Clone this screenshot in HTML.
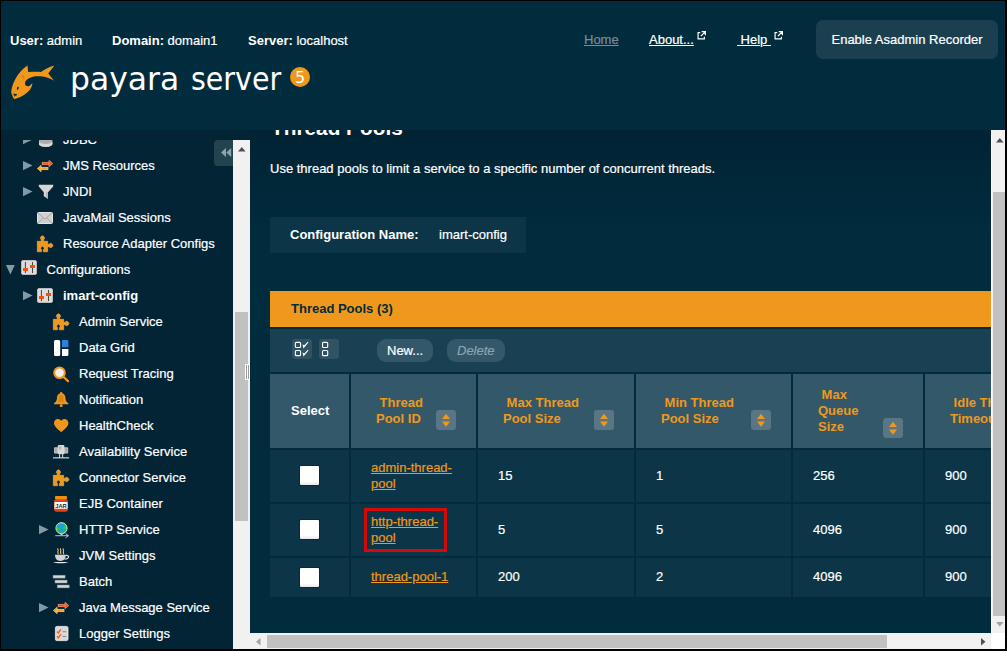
<!DOCTYPE html>
<html lang="en"><head><meta charset="utf-8"><title>Thread Pools - Payara Server Console</title>
<style>
*{box-sizing:border-box}
html,body{margin:0;padding:0}
body{width:1007px;height:651px;overflow:hidden;background:#000;font:13px/15px "Liberation Sans",Arial,sans-serif;color:#fff;position:relative;-webkit-text-stroke:0.200px}
b,h1,.b,.h,#tt,#word,#ver,svg text{-webkit-text-stroke:0}
a{color:inherit}
#app{position:absolute;left:1px;top:1px;width:1004px;height:648px;background:#002c3e;overflow:hidden}
#hdr{position:absolute;left:0;top:0;width:1004px;height:129px;background:#002c3e}
.info{position:absolute;top:32px;height:15px;white-space:nowrap}
.info b{font-weight:bold}
.nav{position:absolute;top:31px;height:15px;white-space:pre;text-decoration:underline}
.ext{position:absolute;top:29.500px}
#rec{position:absolute;left:815px;top:19px;width:182px;height:39px;border-radius:7px;background:#1c3f50;line-height:39px;text-align:center;color:#fff}
#logo{position:absolute;left:4px;top:59px}
#word{position:absolute;left:68.500px;top:53px;width:220px;height:50px;font:32px/50px "DejaVu Sans","Liberation Sans",sans-serif;white-space:nowrap}
#word span{position:absolute;left:0;top:0;display:block;transform-origin:0 0}
#ver{position:absolute;left:289px;top:66px;width:20px;height:20px;border-radius:10px;background:#f0981b;color:#fff;font:16px/22px "DejaVu Sans","Liberation Sans",sans-serif;text-align:center}
#side{position:absolute;left:0;top:129px;width:249px;height:519px;background:#022435}
#tree{position:absolute;left:0;top:10px;width:232px;height:509px;overflow:hidden}
.ti{position:absolute;height:26px;line-height:26px;white-space:nowrap}
.ti.b{font-weight:bold}
.ic{position:absolute;display:block;overflow:visible}
#collapse{position:absolute;left:213px;top:10px;width:30px;height:26px;border-radius:4px 0 0 4px;background:#23434f}
#sscroll{position:absolute;left:232px;top:10px;width:17px;height:509px;background:#f1f1f1}
#sscroll .thumb{position:absolute;left:2px;top:172px;width:13px;height:209px;background:#c1c1c1}
#grip{position:absolute;left:244px;top:234px;width:5px;height:16px;border:1px solid #fff;border-right-width:0;background:linear-gradient(90deg,#9a9a9a 0,#9a9a9a 1px,#fff 1px,#fff 2px,#9a9a9a 2px,#9a9a9a 3px,#fff 3px)}
#main{position:absolute;left:249px;top:129px;width:741px;height:503px;overflow:hidden;background:linear-gradient(180deg,#012333 0,#002c3e 100px,#002c3e 100%)}
h1{position:absolute;left:21px;top:-14px;margin:0;font:bold 20.800px/24px "Liberation Sans",Arial,sans-serif;white-space:nowrap}
#desc{position:absolute;left:20px;top:31px;white-space:nowrap}
#cfg{position:absolute;left:20px;top:87px;width:256px;height:36px;background:#0c3547;line-height:36px;white-space:nowrap}
#cfg b{position:absolute;left:20px}
#cfg span{position:absolute;left:169px}
#tt{position:absolute;left:20px;top:161px;width:760px;height:36px;background:#f0981b;color:#002c3e;font-weight:bold;line-height:36px;padding-left:21px}
#tb{position:absolute;left:20px;top:199px;width:760px;height:43px;background:#1a4053}
.ib{position:absolute;top:10px;width:20px;height:20px;border-radius:3px;background:#2f5363}
.ib svg{display:block}
.btn{position:absolute;top:10px;height:23px;line-height:23px;border-radius:9px;background:#32586a;padding:0 10px;white-space:nowrap}
.btn.dis{font-style:italic;color:#8fa3ad}
.c{position:absolute;background:#0c3547}
.h{position:absolute;top:244px;height:74px;background:#32586a;color:#f0981b;font-weight:bold;line-height:16px;white-space:pre}
.h span{position:absolute}
.sb{position:absolute;width:20px;height:20px;border-radius:3px;background:#587684}
.sb svg{display:block}
.v{position:absolute;left:20px;white-space:nowrap;line-height:16px}
.lk{color:#f0981b;text-decoration:underline}
.cb{position:absolute;left:30px;width:19px;height:19px;border-radius:1px;background:linear-gradient(180deg,#fff 0,#fff 80%,#e9e6e6 100%);box-shadow:0 0 0 1px #072a3a}
#mark{position:absolute;left:114px;top:378px;width:83px;height:44px;border:3px solid #d40a0a}
#vs{position:absolute;left:990px;top:129px;width:14px;height:503px;background:#f1f1f1;border-left:1px solid #fff}
#vs .thumb{position:absolute;left:1px;top:62px;width:12px;height:424px;background:#c1c1c1}
#hs{position:absolute;left:249px;top:632px;width:741px;height:16px;background:#f1f1f1}
#hs .thumb{position:absolute;left:17px;top:2px;width:620px;height:13px;background:#c1c1c1}
#corner{position:absolute;left:990px;top:632px;width:14px;height:16px;background:#fff}
</style></head>
<body>
<div id="app">
 <div id="hdr">
  <div class="info" style="left:9px"><b>User:</b> admin</div>
  <div class="info" style="left:111px"><b>Domain:</b> domain1</div>
  <div class="info" style="left:247px"><b>Server:</b> localhost</div>
  <a class="nav" style="left:583px;color:#818a8e">Home</a>
  <a class="nav" style="left:648px">About...</a><svg class="ext" style="left:696px" width="9" height="9" viewBox="0 0 10 10"><path d="M3.600 1.800H1.200V8.800H8.200V6.400" fill="none" stroke="#fff" stroke-width="1.300"/><path d="M5.200 0.600H9.400V4.800M9.200 0.800 4.300 5.700" fill="none" stroke="#fff" stroke-width="1.400"/></svg>
  <a class="nav" style="left:736px"> Help </a><svg class="ext" style="left:773px" width="9" height="9" viewBox="0 0 10 10"><path d="M3.600 1.800H1.200V8.800H8.200V6.400" fill="none" stroke="#fff" stroke-width="1.300"/><path d="M5.200 0.600H9.400V4.800M9.200 0.800 4.300 5.700" fill="none" stroke="#fff" stroke-width="1.400"/></svg>
  <div id="rec">Enable Asadmin Recorder</div>
  <svg id="logo" width="60" height="45" viewBox="0 0 60 45"><path d="M22.500 5.500 23.200 12.100C27 11.700 32 11.700 36 11.900 39 9.500 44 7 49.400 5.400L43.200 13.500 49.200 20.700C46 18.800 41 17 37.300 16.600 33 16 28 16 23.500 18.500 21 20 19.800 22 20 24 20.500 26.500 24 27 25.500 25 26.300 24.300 26.800 23.800 27.300 23.100 27.500 28 23 33 17.300 36 14 37.700 11 38.800 9 39 8 37.500 7 35 6.200 32.500 6.500 25 12 12 22.500 5.500Z" fill="#f0981b"/><ellipse cx="12.800" cy="28.300" rx="0.800" ry="1.600" transform="rotate(22 12.800 28.300)" fill="#002c3e"/><path d="M8.300 33.500 12.200 34.200 10.800 36.200 9.800 35 9.300 37.200Z" fill="#002c3e"/><path d="M16.300 16.200 19.800 17.500M17 15.300 19 19.300M18.500 15 18.200 19" stroke="#b9781f" stroke-width="0.400"/></svg>
  <div id="word"><span style="transform:scaleX(.981)">payara</span> <span style="left:121.500px;transform:scaleX(.89)">server</span></div>
  <div id="ver">5</div>
 </div>
 <div id="side">
  <div id="tree">
<div class="ti" style="left:62px;top:-13px">JDBC</div>
<div class="ti" style="left:62px;top:13px">JMS Resources</div>
<div class="ti" style="left:62px;top:39px">JNDI</div>
<div class="ti" style="left:62px;top:65px">JavaMail Sessions</div>
<div class="ti" style="left:62px;top:91px">Resource Adapter Configs</div>
<div class="ti" style="left:45.5px;top:117px">Configurations</div>
<div class="ti b" style="left:62px;top:143px">imart-config</div>
<div class="ti" style="left:78px;top:169px">Admin Service</div>
<div class="ti" style="left:78px;top:195px">Data Grid</div>
<div class="ti" style="left:78px;top:221px">Request Tracing</div>
<div class="ti" style="left:78px;top:247px">Notification</div>
<div class="ti" style="left:78px;top:273px">HealthCheck</div>
<div class="ti" style="left:78px;top:299px">Availability Service</div>
<div class="ti" style="left:78px;top:325px">Connector Service</div>
<div class="ti" style="left:78px;top:351px">EJB Container</div>
<div class="ti" style="left:78px;top:377px">HTTP Service</div>
<div class="ti" style="left:78px;top:403px">JVM Settings</div>
<div class="ti" style="left:78px;top:429px">Batch</div>
<div class="ti" style="left:78px;top:455px">Java Message Service</div>
<div class="ti" style="left:78px;top:481px">Logger Settings</div>

<svg class="ic" style="left:37.8px;top:-9px" width="13.400" height="16" viewBox="0 0 13.400 16"><path d="M0 3v10c0 1.600 3 2.900 6.700 2.900s6.700-1.300 6.700-2.900V3Z" fill="#adadad"/><path d="M0 10.800c1.200 1.500 3.500 2.200 6.700 2.200s5.500-.7 6.700-2.200v2.200c0 1.600-3 2.900-6.700 2.900S0 14.600 0 13Z" fill="#d9d9d9"/></svg>
<svg class="ic" style="left:36px;top:20px" width="17" height="13" viewBox="0 0 17 13"><g fill="#ff4d0d" stroke="#ff9a76" stroke-width="0.700"><rect x="5.200" y="2.300" width="7" height="2.400"/><path d="M12 0.300 15.800 3.500 12 6.700Z"/></g><g fill="#f0a322" stroke="#ffd085" stroke-width="0.700"><rect x="4" y="7.300" width="7" height="2.400"/><path d="M4.100 5.300 0.400 8.500 4.100 11.700Z"/></g></svg>
<svg class="ic" style="left:36px;top:43px" width="17" height="17" viewBox="0 0 17 17"><path d="M1.8 1.8H16.2V3.6L11 9.2V15.8L6.8 13.3V9.2L1.8 3.6Z" fill="#d6d6d6"/><path d="M9 9.200V14.600L11 15.800V9.200Z" fill="#b5b5b5"/></svg>
<svg class="ic" style="left:36px;top:72px" width="16" height="12" viewBox="0 0 16 12"><rect x="0.5" y="0.500" width="15" height="11" rx="1" fill="#cfcfcf" stroke="#e4e4e4"/><path d="M1 1 8 7.200 15 1M1 11 6.300 5.800M15 11 9.700 5.800" fill="none" stroke="#a2a2a2" stroke-width="0.9"/></svg>
<svg class="ic" style="left:36px;top:96px" width="17" height="17" viewBox="0 0 17 17"><g fill="#f0981b" stroke="#f6bf6c" stroke-width="0.500" stroke-linejoin="round"><path d="M0.300 5.300H4.250V3.800A2.100 2.100 0 1 1 6.650 3.800V5.300H10.700V8.300H12A2.100 2.100 0 1 1 12 10.700H10.700V15.800H6.350V13.600A1.700 1.700 0 1 0 4.550 13.600V15.800H0.300Z"/></g></svg>
<svg class="ic" style="left:20px;top:120px" width="16" height="15" viewBox="0 0 16 15"><rect x="0.5" y="0.5" width="15" height="14" rx="1.5" fill="#dcdcdc" stroke="#b9b9b9"/><rect x="3.9" y="2" width="1" height="11" fill="#444"/><rect x="11" y="2" width="1" height="11" fill="#444"/><rect x="2" y="8" width="5" height="3" fill="#f4500a"/><rect x="9" y="5" width="5" height="3" fill="#f4500a"/></svg>
<svg class="ic" style="left:36px;top:148px" width="16" height="15" viewBox="0 0 16 15"><rect x="0.5" y="0.5" width="15" height="14" rx="1.5" fill="#dcdcdc" stroke="#b9b9b9"/><rect x="3.9" y="2" width="1" height="11" fill="#444"/><rect x="11" y="2" width="1" height="11" fill="#444"/><rect x="2" y="8" width="5" height="3" fill="#f4500a"/><rect x="9" y="5" width="5" height="3" fill="#f4500a"/></svg>
<svg class="ic" style="left:52px;top:174px" width="17" height="17" viewBox="0 0 17 17"><g fill="#f0981b" stroke="#f6bf6c" stroke-width="0.500" stroke-linejoin="round"><path d="M0.300 5.300H4.250V3.800A2.100 2.100 0 1 1 6.650 3.800V5.300H10.700V8.300H12A2.100 2.100 0 1 1 12 10.700H10.700V15.800H6.350V13.600A1.700 1.700 0 1 0 4.550 13.600V15.800H0.300Z"/></g></svg>
<svg class="ic" style="left:52.8px;top:200px" width="15" height="16" viewBox="0 0 15 16"><rect x="0" y="0" width="6.200" height="16" rx="1.500" fill="#fff"/><path d="M8 0H12.900A1.500 1.500 0 0 1 14.400 1.500V7.300H8Z" fill="#2f7fe0"/><path d="M8 9H14.400V14.500A1.500 1.500 0 0 1 12.900 16H8Z" fill="#fff"/></svg>
<svg class="ic" style="left:51px;top:225px" width="18" height="18" viewBox="0 0 18 18"><circle cx="7.500" cy="7.700" r="5.300" fill="#f3efe8" stroke="#f0981b" stroke-width="2"/><path d="M11.600 12 16 16.200" stroke="#f0981b" stroke-width="2.300" stroke-linecap="round"/></svg>
<svg class="ic" style="left:52.8px;top:251.8px" width="15" height="16" viewBox="0 0 15 16"><path d="M7.200 0c.7 0 1.100.5 1.100 1.200 2 .6 3.100 2.300 3.100 4.500 0 2.600.9 4.300 3 5.500v1H0v-1c2.100-1.200 3-2.900 3-5.500 0-2.200 1.100-3.900 3.100-4.500C6.100.5 6.500 0 7.200 0Z" fill="#f0981b"/><rect x="5.800" y="12.200" width="2.800" height="2.800" rx="1" fill="#f0981b"/><path d="M6 3c-.9.800-1.200 1.800-1.200 3.200 0 1.800-.3 3-.9 4h6.500c-.6-1-.9-2.200-.9-4 0-1.400-.3-2.400-1.200-3.200Z" fill="#dc8410"/></svg>
<svg class="ic" style="left:52.8px;top:278.9px" width="15" height="14" viewBox="0 0 15 14"><path d="M7.200 13.200C3 9.700 0 7.300 0 4.100 0 1.700 1.800 0 3.900 0c1.400 0 2.600.7 3.300 1.900C7.900.7 9.100 0 10.500 0c2.100 0 3.900 1.700 3.900 4.100 0 3.200-3 5.600-7.200 9.100Z" fill="#f0981b"/></svg>
<svg class="ic" style="left:51.9px;top:304.8px" width="17" height="14" viewBox="0 0 17 14"><rect x="1" y="2.200" width="5" height="6.300" rx="0.800" fill="#bdbdbd"/><rect x="10.200" y="2.200" width="5" height="6.300" rx="0.800" fill="#bdbdbd"/><rect x="4.800" y="0" width="6.600" height="9.300" rx="1" fill="#d9d9d9"/><path d="M5.800 2.200h2.500M5.800 4h2.500M1.800 4.200h2M1.800 6h2M12.200 4.200h2.200M12.200 6h2.200" stroke="#8c8c8c" stroke-width="0.800"/><path d="M6.600 9.300V12.800M9.700 9.300V12.800" stroke="#e6e6e6" stroke-width="1"/><rect x="0" y="12.300" width="16.100" height="1.100" fill="#e6e6e6"/></svg>
<svg class="ic" style="left:52px;top:330px" width="17" height="17" viewBox="0 0 17 17"><g fill="#f0981b" stroke="#f6bf6c" stroke-width="0.500" stroke-linejoin="round"><path d="M0.300 5.300H4.250V3.800A2.100 2.100 0 1 1 6.650 3.800V5.300H10.700V8.300H12A2.100 2.100 0 1 1 12 10.700H10.700V15.800H6.350V13.600A1.700 1.700 0 1 0 4.550 13.600V15.800H0.300Z"/></g></svg>
<svg class="ic" style="left:53.2px;top:356.2px" width="14" height="16" viewBox="0 0 14 16"><path d="M2.200 3H11.800C13.400 3.600 14 4.600 14 6V13.200C14 14.700 13 15.700 11.500 15.700H2.500C1 15.700 0 14.700 0 13.200V6C0 4.600 0.600 3.600 2.200 3Z" fill="#e2421b"/><rect x="1" y="0" width="12" height="3.300" rx="1.100" fill="#f78d0c"/><rect x="0.400" y="6.100" width="13.200" height="6.700" rx="0.800" fill="#fff"/><text x="7" y="11.700" font-family="Liberation Sans, sans-serif" font-weight="bold" font-size="6" text-anchor="middle" fill="#0b2a3a" textLength="11.500" lengthAdjust="spacingAndGlyphs">JAR</text></svg>
<svg class="ic" style="left:53px;top:381px" width="16" height="17" viewBox="0 0 16 17"><circle cx="7.500" cy="7.200" r="5.600" fill="#2ad12a" stroke="#d6e6ea" stroke-width="0.900"/><clipPath id="gc"><circle cx="7.500" cy="7.200" r="5.200"/></clipPath><path clip-path="url(#gc)" d="M2 4.800C5 2.800 9 2.600 12 3.600L8.200 7.400 12.500 8C11.500 11.500 6 12.500 3.500 10.800L6.800 6.800 2 6.500Z" fill="#1f9be8"/><rect x="6.500" y="12.800" width="2" height="1.300" fill="#c7d3d8"/><path d="M1.200 14.700H14M11.500 12.600 14.600 14.700 11.500 16.800" stroke="#b5c0c6" stroke-width="1" fill="none"/></svg>
<svg class="ic" style="left:51.9px;top:408px" width="17" height="17" viewBox="0 0 17 17"><path d="M5 0.300c-1 1.200.8 1.800 0 3-.8 1.200.8 1.700 0 2.900M7.700 0.300c-1 1.200.8 1.800 0 3-.8 1.200.8 1.700 0 2.900M10.400 0.300c-1 1.200.8 1.800 0 3-.8 1.200.8 1.700 0 2.900" stroke="#f0be82" stroke-width="1.100" fill="none"/><path d="M2 6.800H12.800C12.800 10.500 11 13 7.400 13S2 10.500 2 6.800Z" fill="#d4d4d4"/><path d="M12.600 7.500c2.400-.6 3.400.8 2.800 2-.6 1.100-2.200 1.600-3.800 1.600" stroke="#e2e2e2" stroke-width="1.200" fill="none"/><path d="M0 13.900H15.300C13 15.600 2.300 15.600 0 13.900Z" fill="#e6e6e6"/></svg>
<svg class="ic" style="left:51.9px;top:435.3px" width="17" height="14" viewBox="0 0 17 14"><g fill="#d6d6d6" stroke="#7c8b92" stroke-width="0.500"><rect x="0" y="0.200" width="12.100" height="2.900"/><rect x="2" y="5.100" width="12.100" height="2.900"/><rect x="4.200" y="10" width="12" height="2.900"/></g></svg>
<svg class="ic" style="left:52px;top:462px" width="17" height="13" viewBox="0 0 17 13"><g fill="#ff4d0d" stroke="#ff9a76" stroke-width="0.700"><rect x="5.200" y="2.300" width="7" height="2.400"/><path d="M12 0.300 15.800 3.500 12 6.700Z"/></g><g fill="#f0a322" stroke="#ffd085" stroke-width="0.700"><rect x="4" y="7.300" width="7" height="2.400"/><path d="M4.100 5.300 0.400 8.500 4.100 11.700Z"/></g></svg>
<svg class="ic" style="left:53.9px;top:485.9px" width="14" height="15" viewBox="0 0 14 15"><rect x="0.400" y="0.400" width="12.600" height="14.200" rx="1.500" fill="#d9d9d9" stroke="#f0f0f0" stroke-width="0.800"/><path d="M2 5.500 3.300 7 6 3.300M2 10.300 3.300 11.800 6 8.100" stroke="#f4601a" stroke-width="1.400" fill="none"/><path d="M7.500 5.700H11.300M7.500 10.500H11.300" stroke="#8a8a8a" stroke-width="1.100"/></svg>
<svg class="ic" style="left:22px;top:-5.5px" width="10" height="10" viewBox="0 0 10 10"><path d="M0 0 9.6 4.6 0 9.2Z" fill="#8399a3"/></svg>
<svg class="ic" style="left:22px;top:21px" width="10" height="10" viewBox="0 0 10 10"><path d="M0 0 9.6 4.6 0 9.2Z" fill="#8399a3"/></svg>
<svg class="ic" style="left:22px;top:47px" width="10" height="10" viewBox="0 0 10 10"><path d="M0 0 9.6 4.6 0 9.2Z" fill="#8399a3"/></svg>
<svg class="ic" style="left:5px;top:125px" width="10" height="10" viewBox="0 0 10 10"><path d="M0 0H8.8L4.4 9.4Z" fill="#8399a3"/></svg>
<svg class="ic" style="left:22px;top:151px" width="10" height="10" viewBox="0 0 10 10"><path d="M0 0 9.6 4.6 0 9.2Z" fill="#8399a3"/></svg>
<svg class="ic" style="left:38px;top:385px" width="10" height="10" viewBox="0 0 10 10"><path d="M0 0 9.6 4.6 0 9.2Z" fill="#8399a3"/></svg>
<svg class="ic" style="left:38px;top:463px" width="10" height="10" viewBox="0 0 10 10"><path d="M0 0 9.6 4.6 0 9.2Z" fill="#8399a3"/></svg>
  </div>
  <div id="collapse"><svg class="ic" style="left:7px;top:8px" width="11" height="10" viewBox="0 0 11 10"><path d="M5 0V9L0 4.500ZM10.200 0V9L5.200 4.500Z" fill="#8fa3ad"/></svg></div>
  <div id="sscroll"><svg class="ic" style="left:4.500px;top:6.500px" width="8" height="5" viewBox="0 0 8 5"><path d="M0 4.500 3.800 0 7.600 4.500Z" fill="#505050"/></svg><div class="thumb"></div></div>
  <div id="grip"></div>
 </div>
 <div id="main">
  <h1>Thread Pools</h1>
  <div id="desc">Use thread pools to limit a service to a specific number of concurrent threads.</div>
  <div id="cfg"><b>Configuration Name:</b><span>imart-config</span></div>
  <div id="tt">Thread Pools (3)</div>
  <div id="tb">
   <div class="ib" style="left:22px"><svg width="20" height="20" viewBox="0 0 20 20"><rect x="3.350" y="3.350" width="5.200" height="5.200" rx="1" fill="none" stroke="#fff" stroke-width="1.100"/><rect x="3.350" y="11.450" width="5.200" height="5.200" rx="1" fill="none" stroke="#fff" stroke-width="1.100"/><path d="M10.500 5.500 12.300 6.300 15.800 2.700 16.500 3.300 11.500 9.400ZM10.500 13.600 12.300 14.400 15.800 10.800 16.500 11.400 11.500 17.500Z" fill="#fff"/></svg></div>
   <div class="ib" style="left:49px"><svg width="20" height="20" viewBox="0 0 20 20"><rect x="3.500" y="3.350" width="5.200" height="5.200" rx="1" fill="none" stroke="#fff" stroke-width="1.100"/><rect x="3.500" y="11.450" width="5.200" height="5.200" rx="1" fill="none" stroke="#fff" stroke-width="1.100"/></svg></div>
   <div class="btn" style="left:107px">New...</div>
   <div class="btn dis" style="left:177px">Delete</div>
  </div>
  <div class="h" style="left:20px;width:79px"><span style="left:21px;top:29px;color:#fff">Select</span></div>
  <div class="h" style="left:101px;width:125px"><span style="left:25px;top:21px"> Thread
Pool ID</span><div class="sb" style="left:85px;top:36px"><svg width="20" height="20" viewBox="0 0 20 20"><path d="M10 3.800 14 9H6Z M6 11.600H14L10 16.700Z" fill="#f0981b"/></svg></div></div>
  <div class="h" style="left:228px;width:156px"><span style="left:25px;top:21px"> Max Thread
Pool Size</span><div class="sb" style="left:116px;top:36px"><svg width="20" height="20" viewBox="0 0 20 20"><path d="M10 3.800 14 9H6Z M6 11.600H14L10 16.700Z" fill="#f0981b"/></svg></div></div>
  <div class="h" style="left:386px;width:155px"><span style="left:25px;top:21px"> Min Thread
Pool Size</span><div class="sb" style="left:115px;top:36px"><svg width="20" height="20" viewBox="0 0 20 20"><path d="M10 3.800 14 9H6Z M6 11.600H14L10 16.700Z" fill="#f0981b"/></svg></div></div>
  <div class="h" style="left:543px;width:130px"><span style="left:25px;top:13px"> Max
Queue
Size</span><div class="sb" style="left:90px;top:44px"><svg width="20" height="20" viewBox="0 0 20 20"><path d="M10 3.800 14 9H6Z M6 11.600H14L10 16.700Z" fill="#f0981b"/></svg></div></div>
  <div class="h" style="left:675px;width:130px"><span style="left:25px;top:21px"> Idle Thread
Timeout</span></div>
  <div class="c" style="left:20px;top:320px;width:79px;height:52px"><div class="cb" style="top:16px"></div></div>
  <div class="c" style="left:101px;top:320px;width:125px;height:52px"><a class="v lk" style="top:10px">admin-thread-<br>pool</a></div>
  <div class="c" style="left:228px;top:320px;width:156px;height:52px"><div class="v" style="top:18px">15</div></div>
  <div class="c" style="left:386px;top:320px;width:155px;height:52px"><div class="v" style="top:18px">1</div></div>
  <div class="c" style="left:543px;top:320px;width:130px;height:52px"><div class="v" style="top:18px">256</div></div>
  <div class="c" style="left:675px;top:320px;width:130px;height:52px"><div class="v" style="top:18px">900</div></div>
  <div class="c" style="left:20px;top:374px;width:79px;height:52px"><div class="cb" style="top:16px"></div></div>
  <div class="c" style="left:101px;top:374px;width:125px;height:52px"><a class="v lk" style="top:10px">http-thread-<br>pool</a></div>
  <div class="c" style="left:228px;top:374px;width:156px;height:52px"><div class="v" style="top:18px">5</div></div>
  <div class="c" style="left:386px;top:374px;width:155px;height:52px"><div class="v" style="top:18px">5</div></div>
  <div class="c" style="left:543px;top:374px;width:130px;height:52px"><div class="v" style="top:18px">4096</div></div>
  <div class="c" style="left:675px;top:374px;width:130px;height:52px"><div class="v" style="top:18px">900</div></div>
  <div class="c" style="left:20px;top:428px;width:79px;height:39px"><div class="cb" style="top:10px"></div></div>
  <div class="c" style="left:101px;top:428px;width:125px;height:39px"><a class="v lk" style="top:10.5px">thread-pool-1</a></div>
  <div class="c" style="left:228px;top:428px;width:156px;height:39px"><div class="v" style="top:10.5px">200</div></div>
  <div class="c" style="left:386px;top:428px;width:155px;height:39px"><div class="v" style="top:10.5px">2</div></div>
  <div class="c" style="left:543px;top:428px;width:130px;height:39px"><div class="v" style="top:10.5px">4096</div></div>
  <div class="c" style="left:675px;top:428px;width:130px;height:39px"><div class="v" style="top:10.5px">900</div></div>
  <div id="mark"></div>
 </div>
 <div id="vs"><svg class="ic" style="left:4px;top:7.500px" width="8" height="5" viewBox="0 0 8 5"><path d="M0 4.500 3.800 0 7.600 4.500Z" fill="#505050"/></svg><div class="thumb"></div><svg class="ic" style="left:4px;top:492px" width="8" height="5" viewBox="0 0 8 5"><path d="M0 0H7.600L3.800 4.500Z" fill="#a3a3a3"/></svg></div>
 <div id="hs"><svg class="ic" style="left:5.500px;top:5px" width="5" height="8" viewBox="0 0 5 8"><path d="M4.500 0V7.600L0 3.800Z" fill="#a3a3a3"/></svg><div class="thumb"></div><svg class="ic" style="left:730.500px;top:4.500px" width="5" height="8" viewBox="0 0 5 8"><path d="M0 0V7.600L4.500 3.800Z" fill="#505050"/></svg></div>
 <div id="corner"></div>
</div>
</body></html>
